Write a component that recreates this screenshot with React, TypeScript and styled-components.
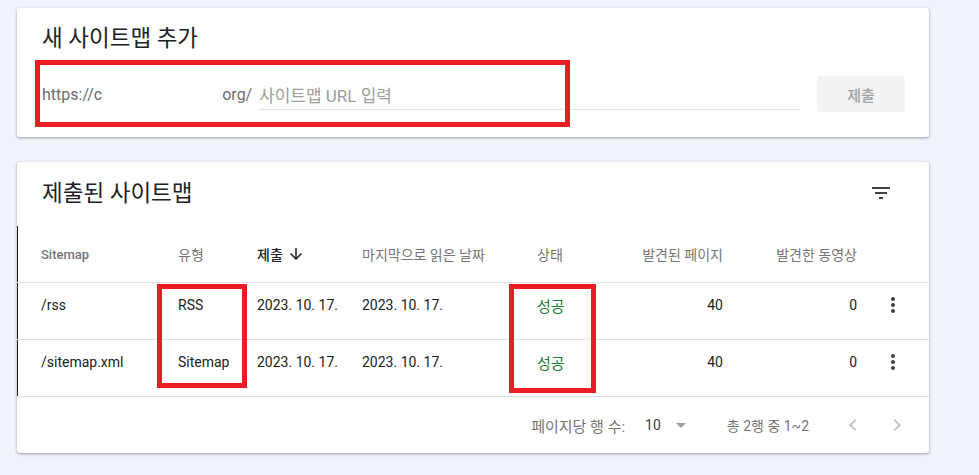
import React from "react";
import styled, { createGlobalStyle } from "styled-components";
import {
  MdFilterList,
  MdMoreVert,
  MdArrowDownward,
  MdArrowDropDown,
  MdChevronLeft,
  MdChevronRight,
} from "react-icons/md";

const GlobalStyle = createGlobalStyle`
  html, body {
    margin: 0;
    background: #f1f4fb;
    font-family: Roboto, "Noto Sans CJK KR", sans-serif;
  }
  * { box-sizing: border-box; }
`;

const Page = styled.div`
  display: flex;
  flex-direction: column;
  gap: 25px;
  width: 912px;
  padding: 8px 0 22px 17px;
  box-sizing: content-box;
`;

const Card = styled.section`
  position: relative;
  background: #fff;
  border-radius: 3px;
  box-shadow: 0 1px 2px 0 rgba(60, 64, 67, 0.3), 0 1px 3px 1px rgba(60, 64, 67, 0.15);
`;

const AddCard = styled(Card)`
  padding: 16px 24px 25px 25px;
`;

const Title = styled.h2`
  margin: 0;
  font-size: 22.5px;
  line-height: 28px;
  font-weight: 400;
  color: #202124;
`;

const SubmitRow = styled.div`
  display: flex;
  align-items: flex-start;
  margin-top: 24px;
`;

const Prefix = styled.div`
  width: 213px;
  margin-right: 4px;
  padding-top: 7px;
  font-size: 16px;
  line-height: 24px;
  color: #6e6e6e;
  white-space: nowrap;
  display: flex;
`;

const Hidden = styled.span<{ $w: number }>`
  display: inline-block;
  width: ${(p) => p.$w}px;
`;

const UrlInput = styled.input`
  flex: 1;
  height: 34px;
  padding: 6px 0 0 0;
  border: none;
  border-bottom: 1px solid #e0e0e0;
  outline: none;
  font-family: inherit;
  font-size: 17px;
  color: #202124;
  background: transparent;
  &::placeholder {
    color: #9e9e9e;
  }
`;

const SubmitButton = styled.button`
  width: 88px;
  height: 36px;
  margin-left: 16px;
  border: none;
  border-radius: 4px;
  background: #f3f3f3;
  color: #a0a0a0;
  font-family: inherit;
  font-size: 15px;
  font-weight: 500;
`;

const Annotation = styled.div<{ $l: number; $t: number; $w: number; $h: number }>`
  position: absolute;
  left: ${(p) => p.$l}px;
  top: ${(p) => p.$t}px;
  width: ${(p) => p.$w}px;
  height: ${(p) => p.$h}px;
  border: 5px solid #ed1c24;
  pointer-events: none;
`;

const TitleBar = styled.div`
  display: flex;
  align-items: center;
  justify-content: space-between;
  height: 64px;
  padding: 0 24px 2px 25px;
`;

const IconButton = styled.button`
  width: 48px;
  height: 48px;
  display: flex;
  align-items: center;
  justify-content: center;
  border: none;
  background: none;
  padding: 0;
  color: #3c4043;
`;

const Table = styled.div`
  box-shadow: inset 1px 0 0 #202124;
`;

const GridRow = styled.div`
  display: grid;
  grid-template-columns: 137px 79px 105px 175px 66px 120px 134px 48px;
  align-items: center;
  padding: 0 24px;
  border-bottom: 1px solid #e0e0e0;
`;

const HeaderRow = styled(GridRow)`
  height: 57px;
  color: #757575;
`;

const HeadCell = styled.div<{ $active?: boolean; $right?: boolean; $latin?: boolean }>`
  display: flex;
  align-items: center;
  gap: 4px;
  justify-content: ${(p) => (p.$right ? "flex-end" : "flex-start")};
  font-size: ${(p) => (p.$latin ? 13 : 14)}px;
  font-weight: ${(p) => (p.$active || p.$latin ? 500 : 400)};
  color: ${(p) => (p.$active ? "#202124" : "#757575")};
  white-space: nowrap;
`;

const BodyRow = styled(GridRow)`
  height: 57px;
  padding-bottom: 12px;
  font-size: 14px;
  color: #202124;
`;

const Cell = styled.div<{ $right?: boolean; $status?: boolean }>`
  text-align: ${(p) => (p.$right ? "right" : "left")};
  color: ${(p) => (p.$status ? "#188038" : "#202124")};
  font-size: ${(p) => (p.$status ? 15 : 14)}px;
  white-space: nowrap;
`;

const KebabCell = styled.div`
  display: flex;
  justify-content: flex-end;
  color: #3c4043;
`;

const Footer = styled.div`
  height: 56px;
  display: flex;
  align-items: center;
  justify-content: flex-end;
  padding-right: 20px;
  font-size: 14px;
  color: #757575;
`;

const PerPageLabel = styled.span`
  font-size: 15px;
  margin-right: 20px;
`;

const PerPageValue = styled.span`
  color: #3c4043;
  margin-right: 8px;
`;

const DropIcon = styled.span`
  display: flex;
  color: #9e9e9e;
  margin-right: 34px;
`;

const RangeText = styled.span`
  margin-right: 32px;
`;

const Pager = styled.div`
  display: flex;
  gap: 20px;
  color: #c4c4c4;
`;

const rows = [
  { path: "/rss", type: "RSS", submitted: "2023. 10. 17.", read: "2023. 10. 17.", status: "성공", pages: 40, videos: 0 },
  { path: "/sitemap.xml", type: "Sitemap", submitted: "2023. 10. 17.", read: "2023. 10. 17.", status: "성공", pages: 40, videos: 0 },
];

export default function App() {
  return (
    <>
      <GlobalStyle />
      <Page>
        <AddCard>
          <Title>새 사이트맵 추가</Title>
          <SubmitRow>
            <Prefix>
              https://c<Hidden $w={120} />org/
            </Prefix>
            <UrlInput placeholder="사이트맵 URL 입력" />
            <SubmitButton>제출</SubmitButton>
          </SubmitRow>
          <Annotation $l={18} $t={52} $w={535} $h={67} />
        </AddCard>

        <Card>
          <TitleBar>
            <Title>제출된 사이트맵</Title>
            <IconButton aria-label="filter">
              <MdFilterList size={24} />
            </IconButton>
          </TitleBar>
          <Table>
            <HeaderRow>
              <HeadCell $latin>Sitemap</HeadCell>
              <HeadCell>유형</HeadCell>
              <HeadCell $active>
                제출 <MdArrowDownward size={18} />
              </HeadCell>
              <HeadCell>마지막으로 읽은 날짜</HeadCell>
              <HeadCell>상태</HeadCell>
              <HeadCell $right>발견된 페이지</HeadCell>
              <HeadCell $right>발견한 동영상</HeadCell>
              <HeadCell />
            </HeaderRow>
            {rows.map((r) => (
              <BodyRow key={r.path}>
                <Cell>{r.path}</Cell>
                <Cell>{r.type}</Cell>
                <Cell>{r.submitted}</Cell>
                <Cell>{r.read}</Cell>
                <Cell $status>{r.status}</Cell>
                <Cell $right>{r.pages}</Cell>
                <Cell $right>{r.videos}</Cell>
                <KebabCell>
                  <MdMoreVert size={24} />
                </KebabCell>
              </BodyRow>
            ))}
          </Table>
          <Footer>
            <PerPageLabel>페이지당 행 수:</PerPageLabel>
            <PerPageValue>10</PerPageValue>
            <DropIcon>
              <MdArrowDropDown size={24} />
            </DropIcon>
            <RangeText>총 2행 중 1~2</RangeText>
            <Pager>
              <MdChevronLeft size={24} />
              <MdChevronRight size={24} />
            </Pager>
          </Footer>
          <Annotation $l={140} $t={122} $w={90} $h={104} />
          <Annotation $l={492} $t={122} $w={87} $h={109} />
        </Card>
      </Page>
    </>
  );
}
